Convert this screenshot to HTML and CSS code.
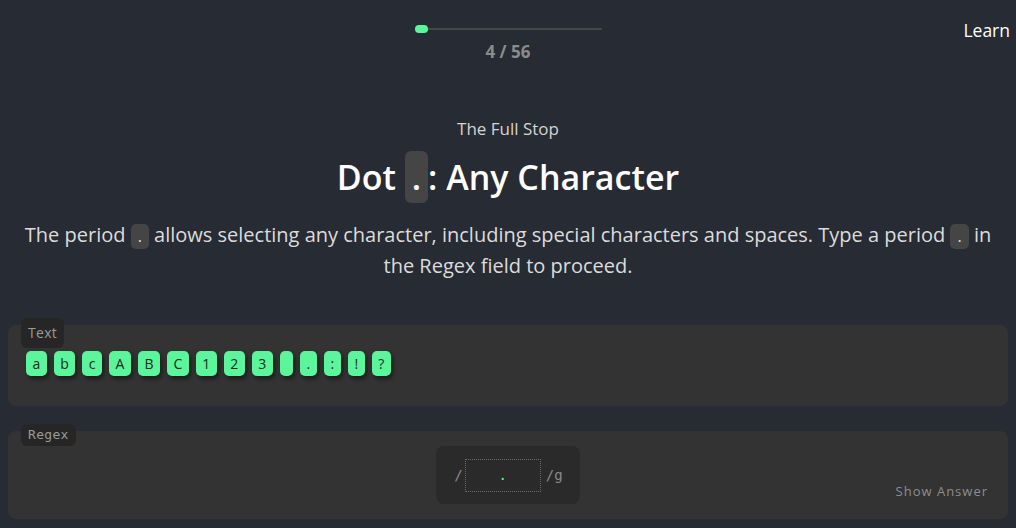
FILE: index.html
```html
<!DOCTYPE html>
<html lang="en">
<head>
<meta charset="utf-8">
<title>Dot: Any Character</title>
<link rel="stylesheet" href="styles.css">
</head>
<body>
<header class="top">
  <div class="spacer"></div>
  <div class="progress">
    <div class="track"><div class="thumb"></div></div>
    <div class="count">4 / 56</div>
  </div>
  <a class="learn" href="#">Learn</a>
</header>

<main class="lesson">
  <div class="subtitle">The Full Stop</div>
  <h1 class="title">Dot <span class="tcode">.</span>: Any Character</h1>
  <p class="desc">The period <span class="icode">.</span> allows selecting any character, including special characters and spaces. Type a period <span class="icode">.</span> in the Regex field to proceed.</p>
</main>

<section class="panel text-panel">
  <span class="label label-text">Text</span>
  <div class="tiles">
    <span class="tile">a</span>
    <span class="tile">b</span>
    <span class="tile">c</span>
    <span class="tile">A</span>
    <span class="tile">B</span>
    <span class="tile">C</span>
    <span class="tile">1</span>
    <span class="tile">2</span>
    <span class="tile">3</span>
    <span class="tile tile-space"> </span>
    <span class="tile">.</span>
    <span class="tile">:</span>
    <span class="tile">!</span>
    <span class="tile">?</span>
  </div>
</section>

<section class="panel regex-panel">
  <span class="label label-regex">Regex</span>
  <div class="spacer"></div>
  <div class="regex-box">
    <span class="slash">/</span>
    <span class="regex-input">.</span>
    <span class="slash">/g</span>
  </div>
  <a class="show" href="#">Show Answer</a>
</section>
</body>
</html>
```

FILE: styles.css
```css
* { box-sizing: border-box; }
html, body { margin: 0; padding: 0; }
body {
  background: #272b33;
  color: #ffffff;
  font-family: "Open Sans", "Noto Sans", sans-serif;
  width: 1016px;
  height: 528px;
  overflow: hidden;
}

.top {
  display: grid;
  grid-template-columns: 1fr auto 1fr;
  height: 64px;
}
.progress {
  display: flex;
  flex-direction: column;
  align-items: center;
  padding-top: 25px;
}
.track {
  position: relative;
  width: 187px;
  height: 8px;
  display: flex;
  align-items: center;
}
.track::before {
  content: "";
  display: block;
  width: 100%;
  height: 2px;
  background: #43464b;
}
.thumb {
  position: absolute;
  left: 0;
  top: 0;
  width: 13px;
  height: 8px;
  border-radius: 4px;
  background: #5bf59b;
}
.count {
  margin-top: 7px;
  font-size: 17px;
  line-height: 24px;
  font-weight: 700;
  color: #8b8b8b;
}
.learn {
  justify-self: end;
  align-self: start;
  margin-top: 18px;
  margin-right: 6px;
  font-size: 17.5px;
  line-height: 24px;
  color: #ffffff;
  text-decoration: none;
}

.lesson {
  text-align: center;
  padding: 0 18px;
}
.subtitle {
  margin-top: 53px;
  font-size: 17px;
  line-height: 24px;
  color: #d4d4d4;
}
.title {
  margin: 10px 0 0;
  font-size: 34px;
  line-height: 52px;
  font-weight: 600;
  color: #ffffff;
}
.tcode {
  display: inline-block;
  padding: 0 7px;
  line-height: 52px;
  background: #454545;
  border-radius: 6px;
}
.desc {
  margin: 16px 0 0;
  font-size: 20px;
  line-height: 31px;
  color: #dcdcdc;
}
.icode {
  display: inline-block;
  padding: 0 7px;
  font-size: 16px;
  line-height: 25px;
  background: #454545;
  border-radius: 5px;
  color: #e0e0e0;
}

.panel {
  position: relative;
  margin: 0 8px;
  background: #333333;
  border-radius: 8px;
}
.label {
  position: absolute;
  left: 13px;
  font-family: "DejaVu Sans Mono", "Liberation Mono", monospace;
  font-size: 13px;
  color: #9a9a9a;
  background: #262626;
  border-radius: 6px;
}
.label-text {
  top: -7px;
  padding: 0 7px;
  line-height: 30px;
  font-family: "Open Sans", sans-serif;
  font-size: 14px;
  letter-spacing: 0.3px;
}
.label-regex {
  top: -7px;
  padding: 0 7px;
  line-height: 22px;
  letter-spacing: 0.3px;
}

.text-panel {
  margin-top: 44px;
  height: 81px;
  padding: 26px 18px 0;
}
.tiles {
  display: flex;
  gap: 7px;
}
.tile {
  display: inline-block;
  min-width: 17px;
  height: 25px;
  padding: 0 6.5px;
  line-height: 25px;
  font-size: 14px;
  color: #1e2a22;
  background: #5bf59b;
  border-radius: 5px;
  box-shadow: 2px 3px 4px rgba(0, 0, 0, 0.45);
  white-space: pre;
  text-align: center;
}
.tile-space { min-width: 0; width: 13px; padding: 0; }

.regex-panel {
  margin-top: 25px;
  height: 88px;
  display: grid;
  grid-template-columns: 1fr auto 1fr;
  align-items: center;
}
.regex-box {
  display: flex;
  align-items: center;
  gap: 2px;
  height: 58px;
  padding: 0 17px 0 18px;
  background: #2a2a2a;
  border-radius: 8px;
  font-family: "DejaVu Sans Mono", "Liberation Mono", monospace;
  font-size: 14px;
  color: #8a8a8a;
}
.regex-input {
  width: 76px;
  height: 33px;
  margin-right: 3px;
  border: 1px dotted #6a6a6a;
  text-align: center;
  line-height: 31px;
  color: #5bf59b;
}
.show {
  justify-self: end;
  align-self: end;
  margin: 0 20px 19px 0;
  font-size: 13px;
  letter-spacing: 1px;
  color: #8d8d8d;
  text-decoration: none;
}
```
